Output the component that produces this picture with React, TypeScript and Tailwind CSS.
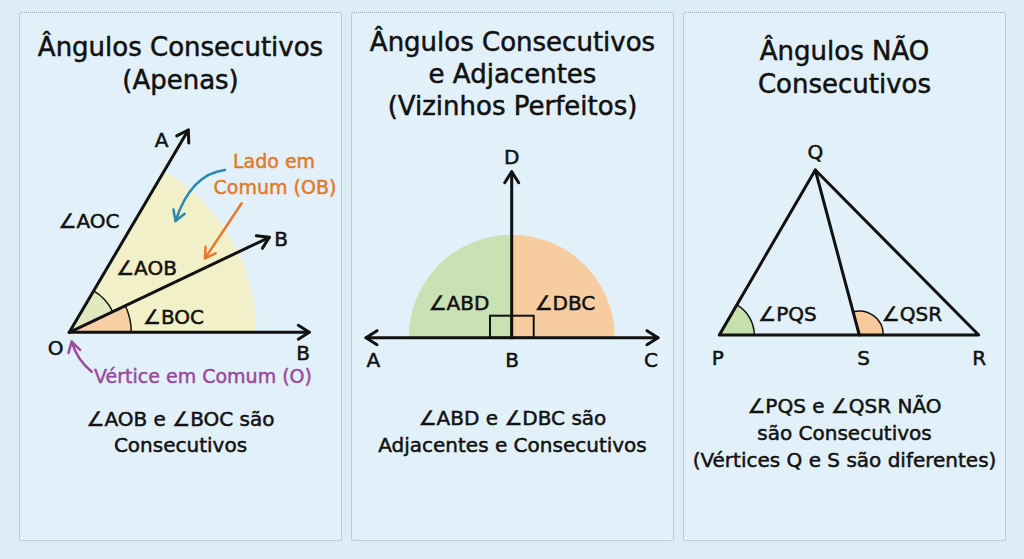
import React from "react";

type Pt = [number, number];

// open arrow head at tip, pointing away from "from"
function head(tip: Pt, from: Pt, len = 11, w = 7) {
  const dx = tip[0] - from[0];
  const dy = tip[1] - from[1];
  const d = Math.hypot(dx, dy);
  const ux = dx / d;
  const uy = dy / d;
  const bx = tip[0] - ux * len;
  const by = tip[1] - uy * len;
  return `M ${bx - uy * w} ${by + ux * w} L ${tip[0]} ${tip[1]} L ${bx + uy * w} ${by - ux * w}`;
}

function Label({
  x,
  y,
  children,
  fill = "#111",
  size = 20,
}: {
  x: number;
  y: number;
  children: React.ReactNode;
  fill?: string;
  size?: number;
}) {
  return (
    <text
      x={x}
      y={y}
      textAnchor="middle"
      fontSize={size}
      fill={fill}
      stroke={fill}
      strokeWidth="0.5"
    >
      {children}
    </text>
  );
}

function Consecutivos() {
  const O: Pt = [50.3, 212.3];
  const A: Pt = [169.3, 10];
  const B: Pt = [250.3, 117.3];
  const C: Pt = [290.3, 212.3];
  return (
    <svg width="323" height="270" viewBox="0 0 323 270">
      <path d="M 50.3 212.3 L 237.3 212.3 A 187 187 0 0 0 145.2 51.2 Z" fill="#f2f0c8" />
      <path d="M 50.3 212.3 L 93.7 191.7 A 48 48 0 0 0 74.7 170.9 Z" fill="#e1eabf" />
      <path d="M 93.7 191.7 A 48 48 0 0 0 74.7 170.9" fill="none" stroke="#111" strokeWidth="1.5" />
      <path d="M 50.3 212.3 L 112.3 212.3 A 62 62 0 0 0 106.3 185.7 Z" fill="#f7cfa4" />
      <path d="M 112.3 212.3 A 62 62 0 0 0 106.3 185.7" fill="none" stroke="#111" strokeWidth="1.5" />

      <g stroke="#111" strokeWidth="3" strokeLinecap="round" strokeLinejoin="round" fill="none">
        <line x1={O[0]} y1={O[1]} x2={A[0]} y2={A[1]} />
        <line x1={O[0]} y1={O[1]} x2={B[0]} y2={B[1]} />
        <line x1={O[0]} y1={O[1]} x2={C[0]} y2={C[1]} />
        <path d={head(A, O)} />
        <path d={head(B, O)} />
        <path d={head(C, O)} />
      </g>

      <g fill="none" strokeWidth="2.5" strokeLinecap="round" strokeLinejoin="round">
        <path d="M 206 50 Q 172 54 156.5 101" stroke="#2b88b0" />
        <path d={head([156.5, 101], [166, 76], 10, 6)} stroke="#2b88b0" />
        <path d="M 222.7 83.3 L 186 138.3" stroke="#e8792a" />
        <path d={head([186, 138.3], [222.7, 83.3], 10, 6)} stroke="#e8792a" />
        <path d="M 72.7 251.7 Q 58 240 52.7 221.7" stroke="#9a4c9c" />
        <path d={head([52.7, 221.7], [56, 234], 10, 6)} stroke="#9a4c9c" />
      </g>

      <Label x={142.7} y={26.7}>A</Label>
      <Label x={262} y={126}>B</Label>
      <Label x={284} y={240}>B</Label>
      <Label x={36.5} y={235}>O</Label>
      <Label x={70} y={108.3}>∠AOC</Label>
      <Label x={127.5} y={155}>∠AOB</Label>
      <Label x={154.5} y={204}>∠BOC</Label>
      <Label x={255} y={48.3} fill="#e27a2c" size={19}>Lado em</Label>
      <Label x={256} y={74} fill="#e27a2c" size={19}>Comum (OB)</Label>
      <Label x={184} y={263} fill="#9a4b9b" size={19}>Vértice em Comum (O)</Label>
    </svg>
  );
}

function Adjacentes() {
  const B: Pt = [160.7, 217.7];
  const D: Pt = [160.7, 51.7];
  const L: Pt = [15, 217.7];
  const R: Pt = [307, 217.7];
  return (
    <svg width="323" height="270" viewBox="0 0 323 270">
      <path d="M 57.7 217.7 A 103 103 0 0 1 160.7 114.7 L 160.7 217.7 Z" fill="#c8e2b3" />
      <path d="M 160.7 114.7 A 103 103 0 0 1 263.7 217.7 L 160.7 217.7 Z" fill="#f8cca1" />
      <g stroke="#111" fill="none" strokeWidth="2">
        <rect x="139" y="195.7" width="21.7" height="22" />
        <rect x="160.7" y="195.7" width="22" height="22" />
      </g>
      <g stroke="#111" strokeWidth="3" strokeLinecap="round" strokeLinejoin="round" fill="none">
        <line x1={B[0]} y1={B[1]} x2={D[0]} y2={D[1]} />
        <line x1={L[0]} y1={L[1]} x2={R[0]} y2={R[1]} />
        <path d={head(D, B)} />
        <path d={head(L, R)} />
        <path d={head(R, L)} />
      </g>
      <Label x={160.7} y={44}>D</Label>
      <Label x={22.3} y={247.3}>A</Label>
      <Label x={161} y={247}>B</Label>
      <Label x={300} y={247}>C</Label>
      <Label x={108} y={190}>∠ABD</Label>
      <Label x={214} y={190}>∠DBC</Label>
    </svg>
  );
}

function NaoConsecutivos() {
  return (
    <svg width="323" height="270" viewBox="0 0 323 270">
      <path d="M 36.3 215 L 71.3 215 A 35 35 0 0 0 53.9 184.8 Z" fill="#c6e0ae" />
      <path d="M 71.3 215 A 35 35 0 0 0 53.9 184.8" fill="none" stroke="#111" strokeWidth="1.5" />
      <path d="M 176.3 215 L 200.3 215 A 24 24 0 0 0 170.1 191.8 Z" fill="#f7c99b" />
      <path d="M 200.3 215 A 24 24 0 0 0 170.1 191.8" fill="none" stroke="#111" strokeWidth="1.5" />
      <g stroke="#111" strokeWidth="3" strokeLinecap="round" strokeLinejoin="round" fill="none">
        <path d="M 36.3 215 L 132.3 50 L 295.7 215 Z" />
        <line x1="132.3" y1="50" x2="176.3" y2="215" />
      </g>
      <Label x={132.3} y={39.3}>Q</Label>
      <Label x={34.7} y={245}>P</Label>
      <Label x={180.7} y={245}>S</Label>
      <Label x={296.3} y={245}>R</Label>
      <Label x={104.5} y={200.7}>∠PQS</Label>
      <Label x={229} y={200.7}>∠QSR</Label>
    </svg>
  );
}

export default function App() {
  return (
    <div className="w-[1024px] h-[559px] bg-[#dcedf7] flex gap-[9px] pl-[19px] pt-[12px] text-[#111] font-['DejaVu_Sans',sans-serif] [-webkit-text-stroke:0.5px_#111]">
      <div className="w-[323px] h-[529px] border border-dotted border-[#9aa4aa] rounded-[3px] bg-[#e2f1f9] flex flex-col items-center">
        <div className="h-[107px] w-full pt-[18px] text-center text-[26px] leading-[33px]">
          <div>Ângulos Consecutivos</div>
          <div>(Apenas)</div>
        </div>
        <Consecutivos />
        <div className="mt-[16px] text-center text-[20px] leading-[26px]">
          <div>∠AOB e ∠BOC são</div>
          <div>Consecutivos</div>
        </div>
      </div>

      <div className="w-[323px] h-[529px] border border-dotted border-[#9aa4aa] rounded-[3px] bg-[#e2f1f9] flex flex-col items-center">
        <div className="h-[107px] w-full pt-[13px] text-center text-[26px] leading-[32px]">
          <div>Ângulos Consecutivos</div>
          <div>e Adjacentes</div>
          <div>(Vizinhos Perfeitos)</div>
        </div>
        <Adjacentes />
        <div className="mt-[15px] text-center text-[20px] leading-[27px]">
          <div>∠ABD e ∠DBC são</div>
          <div>Adjacentes e Consecutivos</div>
        </div>
      </div>

      <div className="w-[323px] h-[529px] border border-dotted border-[#9aa4aa] rounded-[3px] bg-[#e2f1f9] flex flex-col items-center">
        <div className="h-[107px] w-full pt-[22px] text-center text-[26px] leading-[33px]">
          <div>Ângulos NÃO</div>
          <div>Consecutivos</div>
        </div>
        <NaoConsecutivos />
        <div className="mt-[3px] text-center text-[20px] leading-[27px]">
          <div>∠PQS e ∠QSR NÃO</div>
          <div>são Consecutivos</div>
          <div>(Vértices Q e S são diferentes)</div>
        </div>
      </div>
    </div>
  );
}
